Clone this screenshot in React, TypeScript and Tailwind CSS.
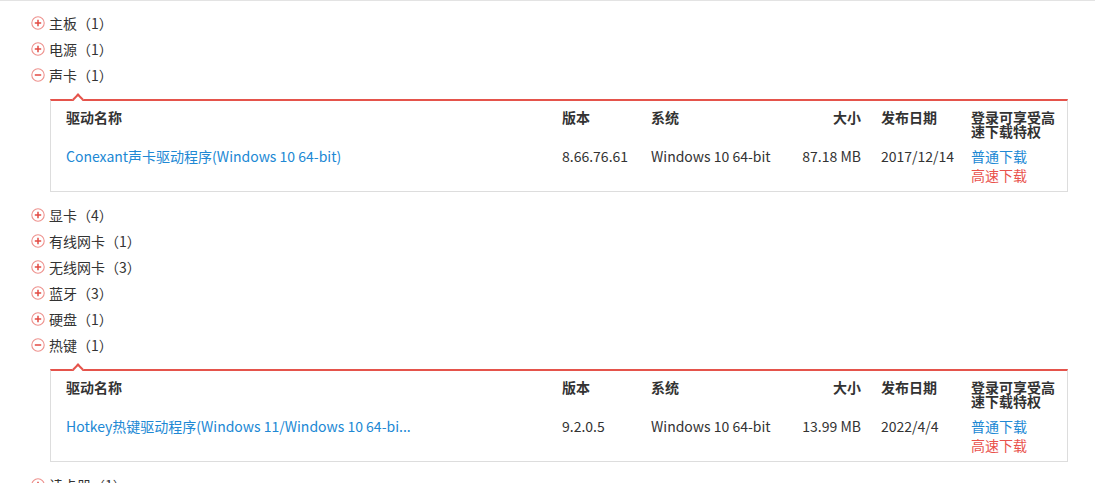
import React from 'react';

interface Driver {
  name: string;
  version: string;
  system: string;
  size: string;
  date: string;
}

interface Category {
  label: string;
  count: number;
  open?: boolean;
  drivers?: Driver[];
}

const CATEGORIES: Category[] = [
  { label: '主板', count: 1 },
  { label: '电源', count: 1 },
  {
    label: '声卡',
    count: 1,
    open: true,
    drivers: [
      {
        name: 'Conexant声卡驱动程序(Windows 10 64-bit)',
        version: '8.66.76.61',
        system: 'Windows 10 64-bit',
        size: '87.18 MB',
        date: '2017/12/14',
      },
    ],
  },
  { label: '显卡', count: 4 },
  { label: '有线网卡', count: 1 },
  { label: '无线网卡', count: 3 },
  { label: '蓝牙', count: 3 },
  { label: '硬盘', count: 1 },
  {
    label: '热键',
    count: 1,
    open: true,
    drivers: [
      {
        name: 'Hotkey热键驱动程序(Windows 11/Windows 10 64-bi...',
        version: '9.2.0.5',
        system: 'Windows 10 64-bit',
        size: '13.99 MB',
        date: '2022/4/4',
      },
    ],
  },
  { label: '读卡器', count: 1 },
];

const ToggleIcon = ({ open }: { open?: boolean }) => (
  <svg width="14" height="14" viewBox="0 0 14 14" className="shrink-0">
    <circle cx="7" cy="7" r="6.2" fill="none" stroke="#ee928e" strokeWidth="1.1" />
    <line x1="3.8" y1="7" x2="10.2" y2="7" stroke="#e24a43" strokeWidth="1.5" />
    {!open && <line x1="7" y1="3.8" x2="7" y2="10.2" stroke="#e24a43" strokeWidth="1.5" />}
  </svg>
);

const DriverPanel = ({ drivers }: { drivers: Driver[] }) => (
  <div className="relative ml-[50px] mr-[27px] mt-[11px] mb-[10px] border-t-2 border-t-[#e5534b] border-x border-b border-[#dddddd] bg-white pt-[9px] pb-[7px] pl-[15px]">
    <span className="absolute -top-[6px] left-[23px] w-[8px] h-[8px] rotate-45 bg-white border-t-2 border-l-2 border-[#e5534b]" />
    <div className="grid grid-cols-[496px_89px_140px_70px_20px_90px_90px] text-[14px] leading-[14px] font-semibold text-[#333]">
      <div>驱动名称</div>
      <div>版本</div>
      <div>系统</div>
      <div className="text-right">大小</div>
      <div />
      <div>发布日期</div>
      <div>登录可享受高速下载特权</div>
    </div>
    {drivers.map((d) => (
      <div
        key={d.name}
        className="grid grid-cols-[496px_89px_140px_70px_20px_90px_90px] mt-[9px] text-[14px] leading-[18px] text-[#333]"
      >
        <a href="#" className="text-[#2088d4] whitespace-nowrap">{d.name}</a>
        <div>{d.version}</div>
        <div>{d.system}</div>
        <div className="text-right whitespace-nowrap">{d.size}</div>
        <div />
        <div>{d.date}</div>
        <div className="flex flex-col">
          <a href="#" className="text-[#2088d4]">普通下载</a>
          <a href="#" className="text-[#e9524c] mt-[1px]">高速下载</a>
        </div>
      </div>
    ))}
  </div>
);

export default function App() {
  return (
    <div className="w-[1095px] h-[483px] overflow-hidden bg-white border-t border-[#e3e3e3] pt-[9px] font-['Noto_Sans_CJK_SC','Noto_Sans',sans-serif]">
      {CATEGORIES.map((c) => (
        <div key={c.label}>
          <div className="flex items-center gap-[4px] pl-[31px] h-[26px] text-[14px] leading-[26px] text-[#333]">
            <ToggleIcon open={c.open} />
            <span>
              {c.label}（{c.count}）
            </span>
          </div>
          {c.open && c.drivers && <DriverPanel drivers={c.drivers} />}
        </div>
      ))}
    </div>
  );
}
